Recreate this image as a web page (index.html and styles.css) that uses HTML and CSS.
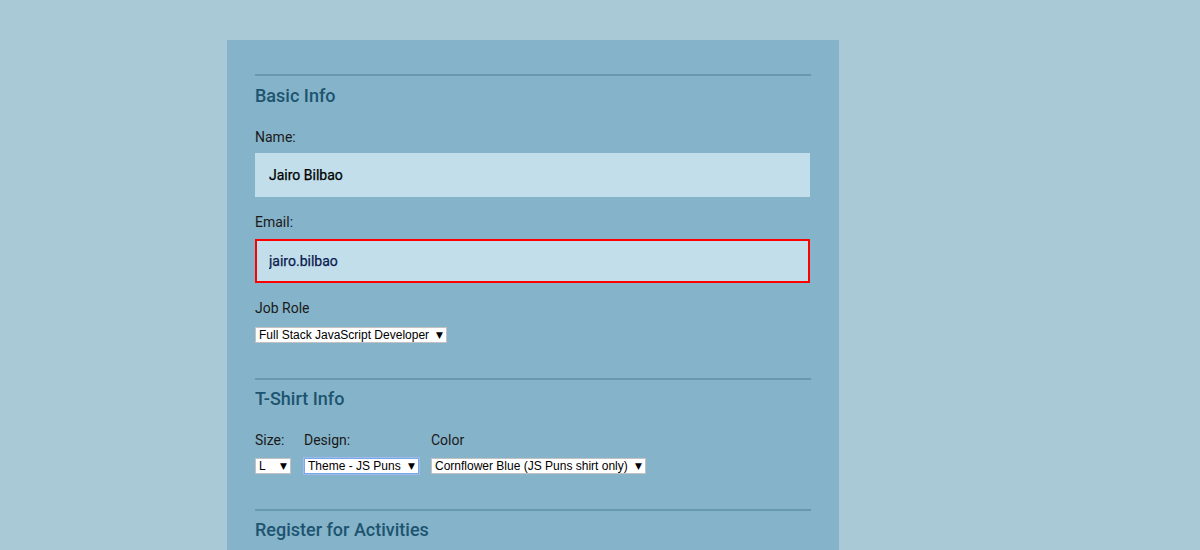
FILE: index.html
```html
<!DOCTYPE html>
<html lang="en">
<head>
<meta charset="utf-8">
<title>Register</title>
<link rel="stylesheet" href="styles.css">
</head>
<body>
<div class="container">
  <form class="form">
    <section class="group">
      <h2 class="legend">Basic Info</h2>
      <label class="label first" for="name">Name:</label>
      <input class="field" id="name" type="text" value="Jairo Bilbao">
      <label class="label" for="mail">Email:</label>
      <input class="field field-error" id="mail" type="text" value="jairo.bilbao">
      <label class="label job-label" for="title">Job Role</label>
      <span class="select job"><span class="select-text">Full Stack JavaScript Developer</span><span class="arrow">▼</span></span>
    </section>
    <section class="group">
      <h2 class="legend">T-Shirt Info</h2>
      <div class="shirt-row">
        <div class="shirt-col size-col">
          <span class="label">Size:</span>
          <span class="select size"><span class="select-text">L</span><span class="arrow">▼</span></span>
        </div>
        <div class="shirt-col design-col">
          <span class="label">Design:</span>
          <span class="select design focused"><span class="select-text">Theme - JS Puns</span><span class="arrow">▼</span></span>
        </div>
        <div class="shirt-col color-col">
          <span class="label">Color</span>
          <span class="select color"><span class="select-text">Cornflower Blue (JS Puns shirt only)</span><span class="arrow">▼</span></span>
        </div>
      </div>
    </section>
    <section class="group">
      <h2 class="legend">Register for Activities</h2>
    </section>
  </form>
</div>
</body>
</html>
```
FILE: styles.css
```css
html, body {
  margin: 0;
  padding: 0;
}
body {
  background: #a9c9d6;
  font-family: Roboto, "Noto Sans", Arial, sans-serif;
  color: #1c1c1c;
  height: 550px;
  overflow: hidden;
}
.container {
  width: 556px;
  margin: 40px 0 0 227px;
  background: #85b3c9;
  padding: 34px 28px 0 28px;
  height: 476px;
  overflow: hidden;
}
.form {
  display: flex;
  flex-direction: column;
}
.group {
  border-top: 2px solid #6799ae;
  padding: 8px 0 35px 0;
  display: flex;
  flex-direction: column;
  align-items: flex-start;
}
.group:first-child {
  padding-top: 9px;
}
.legend {
  margin: 0 0 22px 0;
  font-size: 18px;
  line-height: 22px;
  font-weight: 500;
  color: #1d5470;
}
.label {
  display: block;
  font-size: 14px;
  line-height: 17px;
  margin: 0 0 8px 0;
  color: #1a1a1a;
}
.label.first {
  margin-bottom: 7px;
}
.field {
  box-sizing: border-box;
  width: 555px;
  height: 44px;
  border: 0;
  background: #c1deea;
  padding: 0 14px;
  margin: 0 0 17px 0;
  font-family: Roboto, "Noto Sans", Arial, sans-serif;
  font-size: 14px;
  font-weight: 400;
  color: #000;
  -webkit-text-stroke: 0.25px #000;
  outline: none;
}
.field-error {
  border: 2px solid #ff0000;
  padding: 0 12px;
  color: #0b1a4f;
  -webkit-text-stroke: 0.25px #0b1a4f;
}
.label.job-label {
  margin-bottom: 10px;
}
.select {
  box-sizing: border-box;
  display: inline-flex;
  align-items: center;
  justify-content: space-between;
  height: 16px;
  background: #fff;
  border: 1px solid #c2c2c2;
  font-family: "Liberation Sans", Arial, sans-serif;
  font-size: 12px;
  line-height: 14px;
  color: #000;
  padding: 0 3px 0 3px;
  white-space: nowrap;
}
.arrow {
  font-family: "DejaVu Sans", sans-serif;
  font-size: 9px;
  margin-left: 6px;
}
.job {
  width: 192px;
}
.shirt-row {
  display: flex;
  gap: 13px;
  align-items: flex-start;
}
.shirt-col {
  display: flex;
  flex-direction: column;
  align-items: flex-start;
}
.shirt-col .label {
  margin-bottom: 9px;
}
.size { width: 36px; }
.design { width: 115px; }
.color-col .select { width: 215px; }
.focused {
  border: 1px solid #7da6e8;
  box-shadow: 0 0 0 1px #9dbcee;
}
.design-col { width: 114px; }
```
